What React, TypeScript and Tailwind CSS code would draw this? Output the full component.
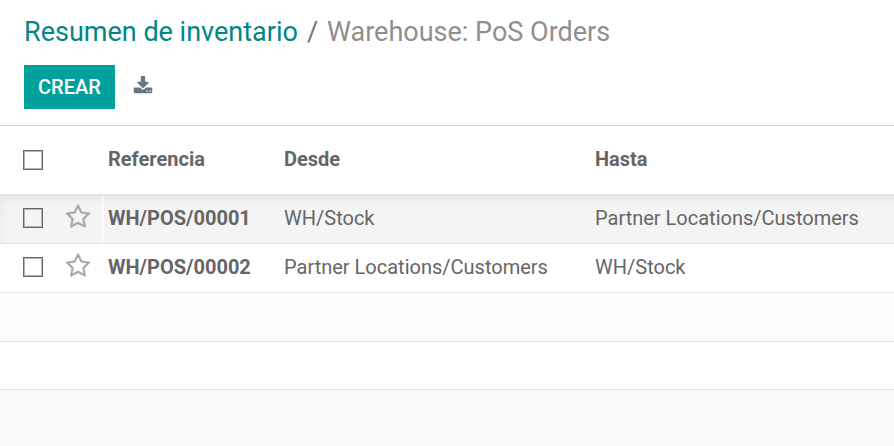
type Picking = {
  reference: string;
  from: string;
  to: string;
};

const pickings: Picking[] = [
  { reference: "WH/POS/00001", from: "WH/Stock", to: "Partner Locations/Customers" },
  { reference: "WH/POS/00002", from: "Partner Locations/Customers", to: "WH/Stock" },
];

function DownloadIcon() {
  return (
    <svg viewBox="0 0 1792 1792" className="size-5" fill="currentColor" aria-hidden="true">
      <path d="M1344 1344q0-26-19-45t-45-19-45 19-19 45 19 45 45 19 45-19 19-45zm256 0q0-26-19-45t-45-19-45 19-19 45 19 45 45 19 45-19 19-45zm128-224v320q0 40-28 68t-68 28h-1472q-40 0-68-28t-28-68v-320q0-40 28-68t68-28h465l135 136q58 56 136 56t136-56l136-136h464q40 0 68 28t28 68zm-325-569q17 41-14 70l-448 448q-18 19-45 19t-45-19l-448-448q-31-29-14-70 17-39 59-39h256v-448q0-26 19-45t45-19h256q26 0 45 19t19 45v448h256q42 0 59 39z" />
    </svg>
  );
}

function StarIcon() {
  return (
    <svg viewBox="0 0 1792 1792" className="block size-[26px]" fill="currentColor" stroke="currentColor" strokeWidth="24" aria-hidden="true">
      <path d="M1201 1004l306-297-422-62-189-382-189 382-422 62 306 297-73 421 378-199 377 199zm527-357q0 22-26 48l-363 354 86 500q1 7 1 20 0 50-41 50-19 0-40-12l-449-236-449 236q-22 12-40 12-21 0-31.5-14.5t-10.5-35.5q0-6 2-20l86-500-364-354q-25-27-25-48 0-37 56-46l502-73 225-455q19-41 49-41t49 41l225 455 502 73q56 9 56 46z" />
    </svg>
  );
}

function Checkbox({ label }: { label: string }) {
  return (
    <input
      type="checkbox"
      aria-label={label}
      className="block size-5 appearance-none border border-[#63676c] shadow-[inset_0_0_0_1px_#adb5bd] checked:bg-[#00a09d]"
    />
  );
}

export default function App() {
  return (
    <div className="min-h-screen bg-[#f9f9f9] font-[Roboto,sans-serif] text-[#666666]">
      <header className="border-b border-[#cccccc] bg-white px-6 pt-3 pb-4">
        <nav aria-label="breadcrumb">
          <ol className="flex gap-[9px] text-[27px] leading-10">
            <li>
              <a href="#" className="text-[#008784]">Resumen de inventario</a>
            </li>
            <li aria-hidden="true" className="text-[#6c757d]">/</li>
            <li className="text-[#8f8f8f]">Warehouse: PoS Orders</li>
          </ol>
        </nav>
        <div className="mt-[13px] flex items-center gap-[18px]">
          <button type="button" className="h-11 bg-[#00a09d] px-[14px] text-[20px] font-medium text-white">
            CREAR
          </button>
          <button type="button" aria-label="Exportar" className="pb-0.5 text-[#6c757d]">
            <DownloadIcon />
          </button>
        </div>
      </header>

      <table className="w-full table-fixed border-separate border-spacing-0 bg-white text-left text-[20px] [&_td]:border-b [&_td]:border-[#dee2e6] [&_th]:border-b [&_th]:border-[#dee2e6]">
        <colgroup>
          <col className="w-[60px]" />
          <col className="w-[43px]" />
          <col className="w-[176px]" />
          <col className="w-[311px]" />
          <col />
        </colgroup>
        <thead>
          <tr className="h-[69px]">
            <th className="pl-[23px]">
              <Checkbox label="Seleccionar todo" />
            </th>
            <th />
            <th className="px-[5px] pb-0.5 font-bold">Referencia</th>
            <th className="px-[5px] pb-0.5 font-bold">Desde</th>
            <th className="px-[5px] pb-0.5 font-bold">Hasta</th>
          </tr>
        </thead>
        <tbody>
          {pickings.map((p) => (
            <tr
              key={p.reference}
              className="h-[49px] first:bg-[#f4f4f4] first:shadow-[inset_4px_8px_12px_-6px_rgba(0,0,0,0.09)]"
            >
              <td className="pb-0.5 pl-[23px]">
                <Checkbox label={p.reference} />
              </td>
              <td className="border-r border-r-white! pb-1 pl-[5px]">
                <button type="button" aria-label="Favorito" className="block text-[#a8a8a8]">
                  <StarIcon />
                </button>
              </td>
              <td className="px-[5px] pb-0.5 font-bold">{p.reference}</td>
              <td className="px-[5px] pb-0.5">{p.from}</td>
              <td className="px-[5px] pb-0.5">{p.to}</td>
            </tr>
          ))}
          <tr className="h-[49px] bg-[#fcfcfd]">
            <td colSpan={5} />
          </tr>
          <tr className="h-12">
            <td colSpan={5} />
          </tr>
        </tbody>
      </table>
    </div>
  );
}
